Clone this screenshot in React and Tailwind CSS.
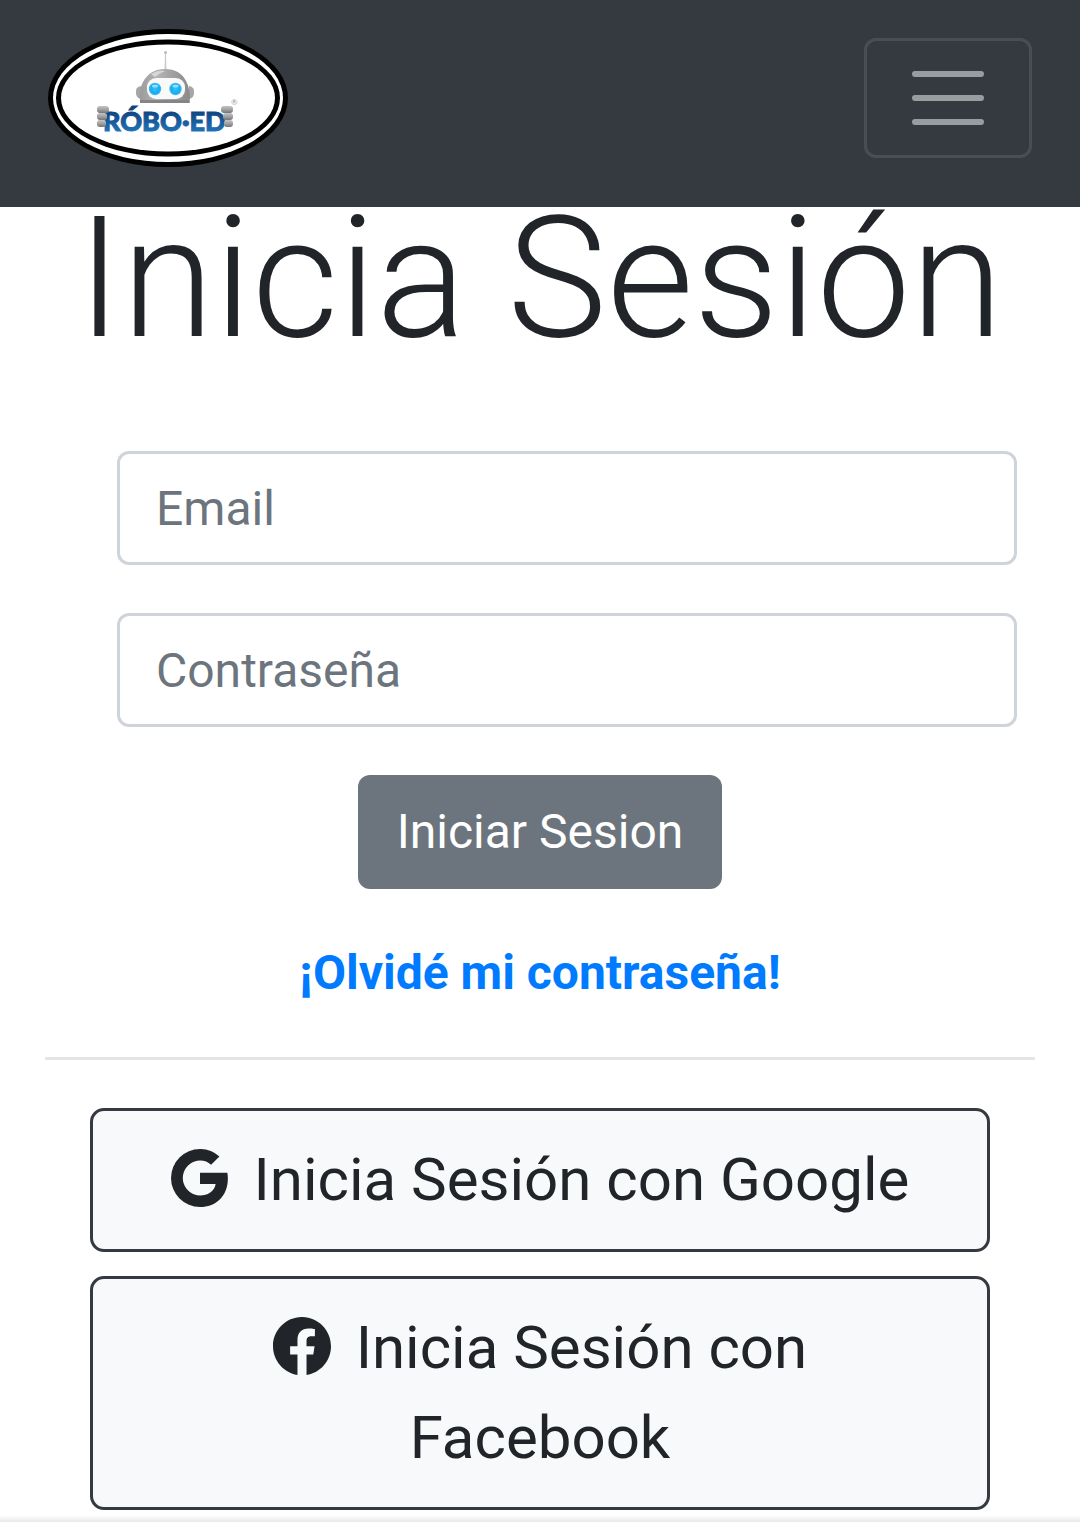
import { BsFacebook, BsGoogle } from "react-icons/bs";

function Fingers() {
  return (
    <g fill="url(#metal)">
      <rect x="0" y="0" width="12" height="7" rx="3" />
      <rect x="0" y="7" width="10" height="7" rx="3" />
      <rect x="0" y="14" width="9" height="7" rx="3" />
    </g>
  );
}

function Logo() {
  return (
    <svg viewBox="0 0 240 138" className="block h-[138px] w-60" role="img" aria-label="Róbo-Ed">
      <defs>
        <linearGradient id="metal" x1="0" y1="0" x2="0" y2="1">
          <stop offset="0" stopColor="#c4c4c4" />
          <stop offset="0.5" stopColor="#a2a2a2" />
          <stop offset="1" stopColor="#747474" />
        </linearGradient>
        <linearGradient id="head" x1="0" y1="0" x2="1" y2="0">
          <stop offset="0" stopColor="#9b9b9b" />
          <stop offset="0.35" stopColor="#b4b4b4" />
          <stop offset="1" stopColor="#8a8a8a" />
        </linearGradient>
        <linearGradient id="word" x1="0" y1="0" x2="0" y2="1">
          <stop offset="0.2" stopColor="#10427e" />
          <stop offset="0.85" stopColor="#1f74b8" />
        </linearGradient>
        <radialGradient id="eye">
          <stop offset="0" stopColor="#35c3fb" />
          <stop offset="0.7" stopColor="#12aef2" />
          <stop offset="1" stopColor="#55b8e4" />
        </radialGradient>
      </defs>
      <ellipse cx="120" cy="69" rx="120" ry="69" fill="#000" />
      <ellipse cx="120" cy="69" rx="115" ry="64" fill="#fff" />
      <ellipse cx="120" cy="69" rx="112" ry="58.500" fill="#000" />
      <ellipse cx="120" cy="69" rx="107" ry="53.500" fill="#fff" />
      <path d="M116.500 42 L117 24 L118 24 L118.500 42 Z" fill="#c9c9c9" />
      <circle cx="117.500" cy="23.500" r="1.500" fill="#bbb" />
      <path d="M93 57 Q87 58 88 64 Q88 69 93 70 Z" fill="#a6a6a6" />
      <path d="M141 57 Q147 58 146 64 Q146 69 141 70 Z" fill="#a6a6a6" />
      <path d="M92 74 Q91 60 95 53 Q102 40 117 40 Q132 40 138 52 Q143 61 141.500 74 Z" fill="url(#head)" />
      <path d="M103 45 Q110 41 117 42 Q112 44 107 48 Z" fill="#d8d8d8" />
      <path d="M92 71 H141.500 V74 H92 Z" fill="#858585" />
      <rect x="99" y="49" width="38" height="21" rx="9" fill="#f7f9fa" />
      <circle cx="107" cy="60" r="6.200" fill="url(#eye)" />
      <circle cx="127.500" cy="60" r="6.200" fill="url(#eye)" />
      <ellipse cx="107" cy="57" rx="3" ry="1.500" fill="#8fe0ff" />
      <ellipse cx="127.500" cy="57" rx="3" ry="1.500" fill="#8fe0ff" />
      <text x="55" y="102" fill="url(#word)" stroke="url(#word)" strokeWidth="1" fontFamily="Lato, sans-serif" fontWeight="900" fontSize="27">RÓBO·ED</text>
      <g transform="translate(49 77)"><Fingers /></g>
      <g transform="translate(185 77) scale(-1 1)"><Fingers /></g>
      <text x="183" y="76" fill="#999" fontFamily="Lato, sans-serif" fontSize="8">®</text>
    </svg>
  );
}

function Field({ type, label }) {
  return (
    <input
      type={type}
      aria-label={label}
      placeholder={label}
      className="block h-[114px] w-full rounded-xl border-3 border-[#ced4da] bg-white px-9 text-[48px] text-[#495057] placeholder:text-[#6c757d] placeholder:opacity-100"
    />
  );
}

function SocialButton({ icon: Icon, children }) {
  return (
    <button type="button" className="w-full rounded-[14px] border-3 border-[#343a40] bg-[#f8f9fa] px-12 py-6 text-center text-[60px] leading-[90px]">
      <Icon className="mr-2.5 inline-block size-[58px] align-[-7px]" aria-hidden="true" /> {children}
    </button>
  );
}

export default function App() {
  return (
    <div className="bg-white font-[Roboto,sans-serif] text-[#212529]">
      <header className="flex items-center justify-between bg-[#343a40] px-12 pt-[29px] pb-10">
        <a href="#inicio"><Logo /></a>
        <button type="button" aria-label="Menú" className="flex h-[120px] w-[168px] items-center justify-center rounded-xl border-3 border-white/10">
          <svg viewBox="0 0 30 30" className="size-[90px]" stroke="#fff" strokeOpacity="0.5" strokeLinecap="round" strokeWidth="2">
            <path d="M4 7h22M4 15h22M4 23h22" />
          </svg>
        </button>
      </header>
      <main>
        <h1 className="text-center text-[168px] leading-[143px] font-light whitespace-nowrap">Inicia Sesión</h1>
        <form className="mt-[101px] flex flex-col gap-12 pr-[63px] pl-[117px]" onSubmit={(e) => e.preventDefault()}>
          <Field type="email" label="Email" />
          <Field type="password" label="Contraseña" />
          <button type="submit" className="-ml-[54px] h-[114px] self-center rounded-xl bg-[#6c757d] px-[39px] text-[48px] text-white">Iniciar Sesion</button>
        </form>
        <p className="mt-12 text-center text-[48px] leading-[72px]">
          <a href="#recuperar" className="font-bold text-[#007bff]">¡Olvidé mi contraseña!</a>
        </p>
        <hr className="mx-[45px] my-12 border-t-3 border-black/10" />
        <div className="flex flex-col gap-6 px-[90px]">
          <SocialButton icon={BsGoogle}>Inicia Sesión con Google</SocialButton>
          <SocialButton icon={BsFacebook}>Inicia Sesión con Facebook</SocialButton>
        </div>
      </main>
      <div className="h-3 bg-linear-to-b from-white from-40% to-[#e9e9e9]" />
    </div>
  );
}
